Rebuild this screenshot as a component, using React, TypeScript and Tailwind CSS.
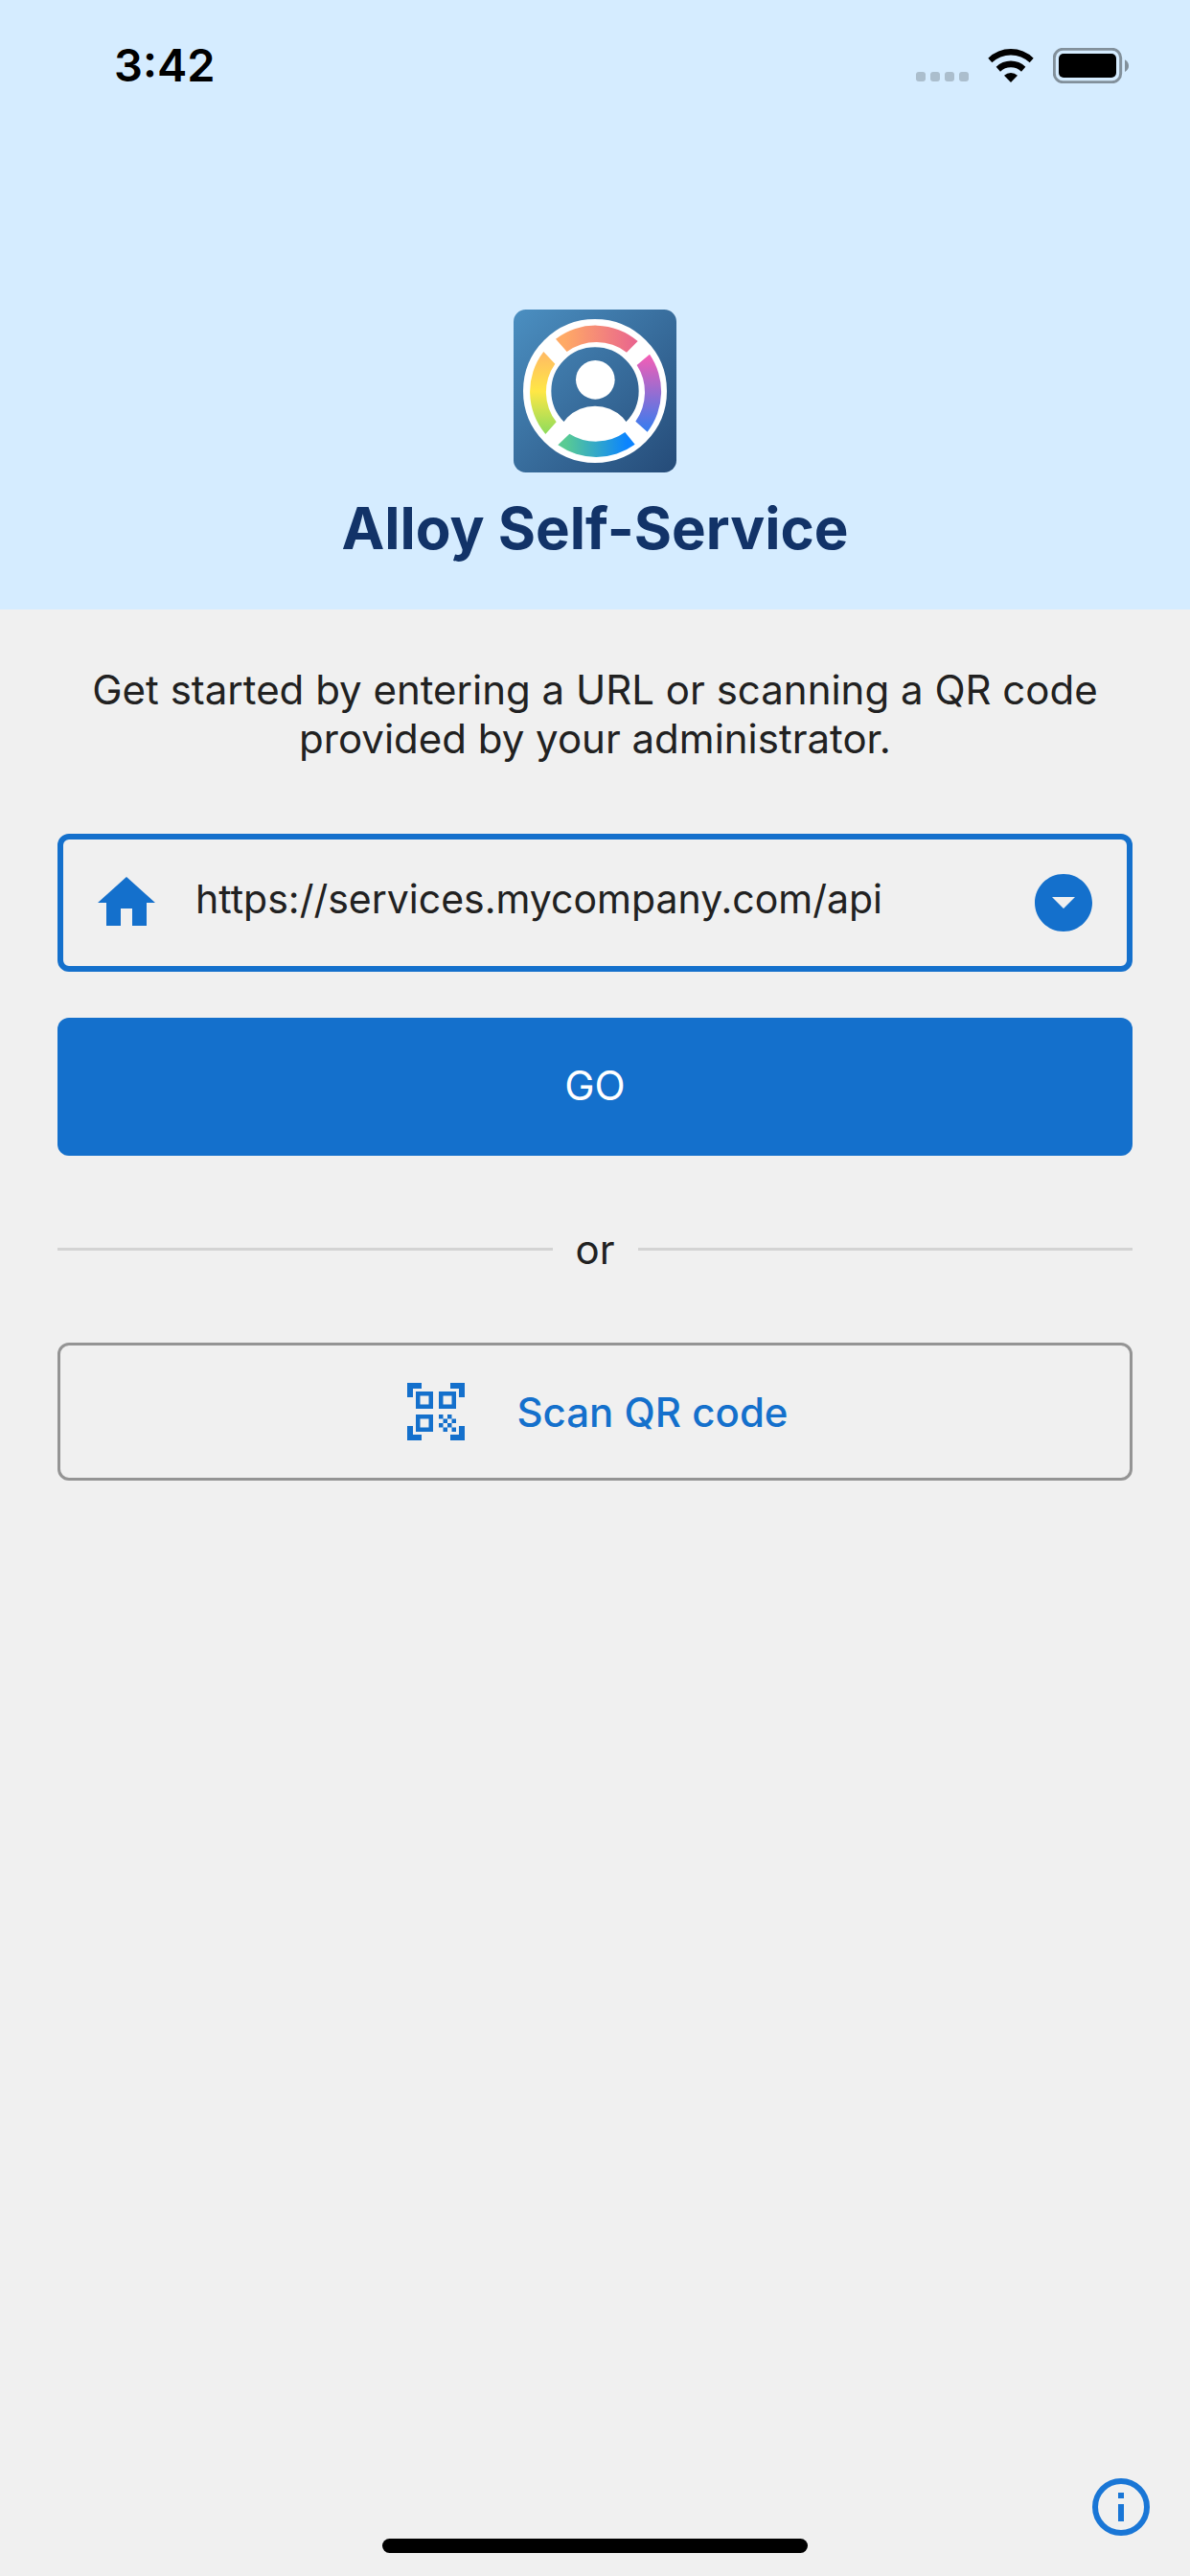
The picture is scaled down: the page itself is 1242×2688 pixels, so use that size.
import React, { useState } from 'react';
import { MdArrowDropDownCircle, MdHome, MdQrCodeScanner } from 'react-icons/md';

function StatusBar() {
    return (
        <div className="h-[132px] flex items-center justify-between pt-1 pl-[119px] pr-16 text-black">
            <span className="text-[47px] leading-[60px] font-semibold">3:42</span>
            <div className="flex items-center gap-5">
                {/* Signal */}
                <div className="flex gap-[5px] pt-6">
                    <span className="size-[10px] rounded-[3px] bg-[#abbecd]" />
                    <span className="size-[10px] rounded-[3px] bg-[#abbecd]" />
                    <span className="size-[10px] rounded-[3px] bg-[#abbecd]" />
                    <span className="size-[10px] rounded-[3px] bg-[#abbecd]" />
                </div>
                {/* Wifi */}
                <svg className="w-12 h-9" viewBox="0 0 144 108" aria-hidden="true">
                    <path d="M1 32A102 102 0 0 1 143 32L131 46A85 85 0 0 0 13 46Z" />
                    <path d="M26 59A66 66 0 0 1 118 59L105 74A48 48 0 0 0 39 74Z" />
                    <path d="M51 86A32 32 0 0 1 93 86L72 108Z" />
                </svg>
                {/* Battery */}
                <svg className="w-[79px] h-[37px]" viewBox="0 0 237 111" aria-hidden="true">
                    <rect x="4" y="4" width="208" height="103" rx="27" fill="none" stroke="#82909b" strokeWidth="9" />
                    <rect x="18" y="18" width="180" height="75" rx="15" />
                    <path d="M225 37Q237 44 237 56T225 75Z" fill="#82909b" />
                </svg>
            </div>
        </div>
    );
}

function Logo() {
    return (
        <svg className="size-[170px]" viewBox="-255 -255 510 510" role="img" aria-label="Alloy Self-Service logo">
            <defs>
                <linearGradient id="tile" x1="0" y1="0" x2="1" y2="1">
                    <stop offset="0" stopColor="#4b8fc1" />
                    <stop offset="1" stopColor="#254b78" />
                </linearGradient>
                <linearGradient id="top">
                    <stop offset="0.1" stopColor="#ffaa65" />
                    <stop offset="1" stopColor="#e9638f" />
                </linearGradient>
                <linearGradient id="right" x1="0" y1="0" x2="0" y2="1">
                    <stop offset="0" stopColor="#f75db4" />
                    <stop offset="1" stopColor="#337df0" />
                </linearGradient>
                <linearGradient id="bottom">
                    <stop offset="0.1" stopColor="#59cb93" />
                    <stop offset="0.9" stopColor="#0b84ff" />
                </linearGradient>
                <linearGradient id="left" x1="0" y1="0" x2="0" y2="1">
                    <stop offset="0" stopColor="#ffb965" />
                    <stop offset="0.48" stopColor="#ffe746" />
                    <stop offset="1" stopColor="#8ddc5c" />
                </linearGradient>
                <clipPath id="ring">
                    <circle r="200" />
                </clipPath>
            </defs>
            <rect x="-255" y="-255" width="510" height="510" rx="38" fill="url(#tile)" />
            <circle r="181" fill="none" stroke="#fff" strokeWidth="88" />
            <circle cx="1" cy="-35" r="61" fill="#fff" />
            <circle cy="169" r="122" fill="#fff" clipPath="url(#ring)" />
            <path d="M-123 -163A204 204 0 0 1 134 -156L99 -121A156 156 0 0 0 -88 -123Z" fill="url(#top)" />
            <path d="M171 -115A206 206 0 0 1 164 128L127 95A157 157 0 0 0 131 -81Z" fill="url(#right)" />
            <path d="M125 167A207 207 0 0 1 -116 169L-80 134A157 157 0 0 0 94 129Z" fill="url(#bottom)" />
            <path d="M-155 135A205 205 0 0 1 -161 -123L-125 -85A152 152 0 0 0 -121 97Z" fill="url(#left)" />
        </svg>
    );
}

export default function App() {
    const [url, setUrl] = useState('https://services.mycompany.com/api');

    return (
        <div className="min-h-screen flex flex-col bg-[#f0f0f0] text-[#212121] font-[Inter,'Liberation_Sans',sans-serif]">
            <header className="bg-[#d5ecff]">
                <StatusBar />
                <div className="flex flex-col items-center pt-[191px] pb-[49px]">
                    <Logo />
                    <h1 className="mt-[22px] text-[60px] leading-[72px] font-bold text-[#123368]">Alloy Self-Service</h1>
                </div>
            </header>

            <main className="flex-1 px-[60px] pt-[58px] text-[42px] leading-[51px]">
                <p className="mx-auto max-w-[1080px] text-center">
                    Get started by entering a URL or scanning a QR code provided by your administrator.
                </p>

                <form onSubmit={(e) => e.preventDefault()} className="mt-[74px]">
                    <div className="h-36 flex items-center rounded-xl border-6 border-[#1470cc] px-[30px]">
                        <label htmlFor="service-url" aria-label="Service URL">
                            <MdHome className="size-[72px] text-[#1470cc]" />
                        </label>
                        <input
                            id="service-url"
                            type="text"
                            value={url}
                            onChange={(e) => setUrl(e.target.value)}
                            className="flex-1 min-w-0 pl-9 pb-2 bg-transparent text-[41px] focus:outline-none"
                        />
                        <button type="button" aria-label="Recent URLs">
                            <MdArrowDropDownCircle className="size-[72px] text-[#1470cc]" />
                        </button>
                    </div>
                    <button type="submit" className="mt-12 w-full h-36 pb-[3px] rounded-xl bg-[#1470cc] text-white">
                        GO
                    </button>
                </form>

                <div className="my-[72px] flex items-center gap-6">
                    <span className="flex-1 h-[3px] bg-[#d3d3d3]" />
                    <span>or</span>
                    <span className="flex-1 h-[3px] bg-[#d3d3d3]" />
                </div>

                <button
                    type="button"
                    className="w-full h-36 flex items-center justify-center gap-12 rounded-xl border-3 border-[#949494] font-medium text-[#1470cc]"
                >
                    <MdQrCodeScanner className="size-[72px]" />
                    Scan QR code
                </button>
            </main>

            <footer className="flex flex-col pb-6">
                <button type="button" aria-label="About" className="self-end mr-[42px]">
                    <svg className="size-[60px]" viewBox="2 2 20 20" fill="#1976d6" aria-hidden="true">
                        <path d="M11 7h2v2h-2zM11 11h2v6h-2z" />
                        <circle cx="12" cy="12" r="9" fill="none" stroke="#1976d6" strokeWidth="2" />
                    </svg>
                </button>
                <div className="mt-[3px] mx-auto w-[444px] h-[15px] rounded-full bg-black" />
            </footer>
        </div>
    );
}
